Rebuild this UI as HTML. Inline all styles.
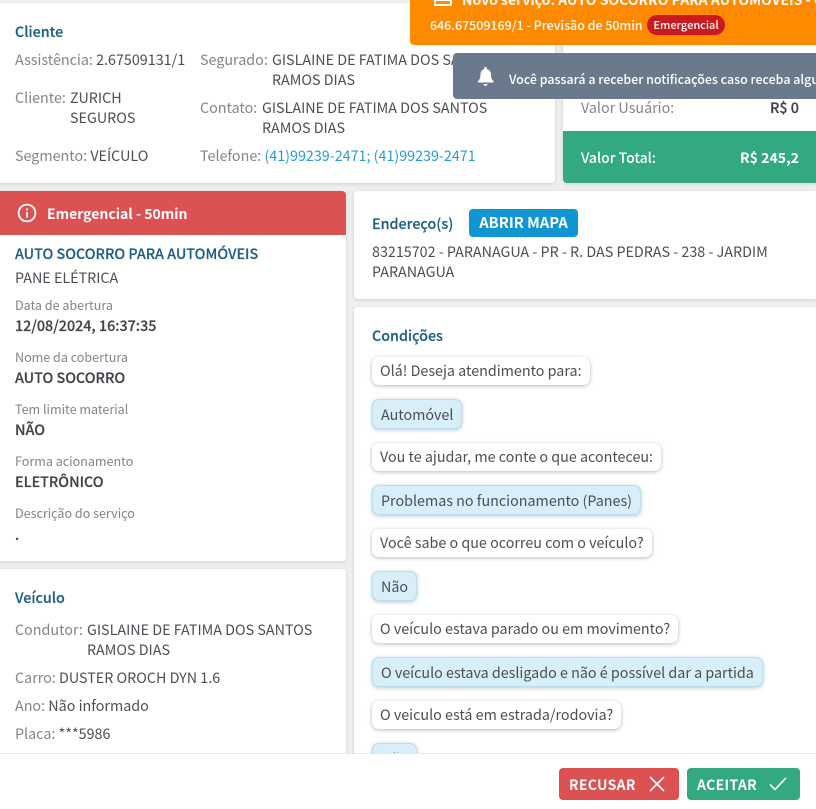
<!DOCTYPE html>
<html lang="pt-BR"><head><meta charset="utf-8"><title>Serviço</title>
<style>
html,body{margin:0;padding:0;width:816px;height:809px;overflow:hidden;background:#eeeeee}
body{position:relative;font-family:"Noto Sans CJK JP","Liberation Sans",sans-serif;font-size:14.32px;color:#4a4f55}
.c{position:absolute;background:#fff;border-radius:4px;box-shadow:0 1px 3px rgba(0,0,0,.12)}
.t{position:absolute;white-space:nowrap;line-height:20px}
.h{color:#1b5e82;font-weight:500;-webkit-text-stroke:.15px #1b5e82}
.l{color:#80858a}
.s{font-size:12.55px;color:#80858a}
.b{font-weight:500;color:#3f4449;-webkit-text-stroke:.2px #3f4449}
.a{color:#2a9bd1}
.q,.r{position:absolute;left:372px;box-sizing:border-box;white-space:nowrap;line-height:20px;border-radius:7px;color:#4a4f55}
.q{height:28px;padding:4px 8px;background:#fff;box-shadow:0 1px 4px rgba(0,0,0,.28)}
.r{height:30px;padding:5px 8px;background:#d8eef8;border:1px solid #b9deee;box-shadow:0 1px 4px rgba(40,90,120,.35)}
</style></head><body>

<div class="c" style="left:0;top:3px;width:555px;height:180px;border-radius:0 4px 4px 0"></div>
<div class="t h" style="left:15px;top:22px">Cliente</div>
<div class="t l" style="left:15px;top:50px">Assistência: <span style="color:#4a4f55">2.67509131/1</span></div>
<div class="t l" style="left:15px;top:88px">Cliente:</div>
<div class="t" style="left:70px;top:88px">ZURICH</div>
<div class="t" style="left:70px;top:108px">SEGUROS</div>
<div class="t l" style="left:15px;top:146px">Segmento: <span style="color:#4a4f55">VEÍCULO</span></div>
<div class="t l" style="left:200px;top:50px">Segurado:</div>
<div class="t" style="left:272px;top:50px">GISLAINE DE FATIMA DOS SANTOS</div>
<div class="t" style="left:272px;top:70px">RAMOS DIAS</div>
<div class="t l" style="left:200px;top:98px">Contato:</div>
<div class="t" style="left:262px;top:98px">GISLAINE DE FATIMA DOS SANTOS</div>
<div class="t" style="left:262px;top:118px">RAMOS DIAS</div>
<div class="t l" style="left:200px;top:146px">Telefone: <span class="a">(41)99239-2471; (41)99239-2471</span></div>

<div class="c" style="left:563px;top:40px;width:253px;height:143px;border-radius:4px 0 0 4px"></div>
<div class="t l" style="left:581px;top:98px">Valor Usuário:</div>
<div class="t b" style="left:770px;top:98px">R$ 0</div>
<div style="position:absolute;left:563px;top:131px;width:253px;height:52px;background:#33a97f;border-radius:0 0 0 4px"></div>
<div class="t" style="left:581px;top:148px;color:#fff;font-weight:500;font-size:14px">Valor Total:</div>
<div class="t" style="left:740px;top:148px;color:#fff;font-weight:700;font-size:14.1px">R$ 245,2</div>

<div style="position:absolute;left:410px;top:-1px;width:406px;height:46px;background:#ff8a00;border-radius:0 0 0 4px;overflow:hidden">
<svg style="position:absolute;left:22px;top:-6px" width="22" height="14" viewBox="0 0 22 14" fill="none" stroke="#fff" stroke-width="2"><path d="M3 1V12H19V1M3 7H19"/></svg>
<div class="t" style="left:52px;top:-9px;color:#fff;font-weight:700;font-size:14px">Novo serviço: AUTO SOCORRO PARA AUTOMÓVEIS - CLIENTE</div>
<div class="t" style="left:20px;top:16px;color:#fff;font-size:12.45px;font-weight:500">646.67509169/1 - Previsão de 50min</div>
<div class="t" style="left:237px;top:16px;height:20px;width:78px;text-align:center;background:#cb1a1f;border-radius:10px;color:#fff;font-size:11px;font-weight:500">Emergencial</div>
</div>

<div style="position:absolute;left:453px;top:53px;width:363px;height:46px;background:#6a7a8c;border-radius:4px 0 0 4px;overflow:hidden">
<svg style="position:absolute;left:23px;top:13px" width="19" height="21" viewBox="0 0 19 21" fill="#fff"><path d="M9.5 1a1.4 1.4 0 0 1 1.4 1.4v.7c3 .7 4.2 3.2 4.2 6 0 3.4 1 4.6 2.4 6.2.4.5.1 1.2-.6 1.2H2.600c-.7 0-1-.7-.6-1.200C3.400 13.700 4.400 12.500 4.400 9.100c0-2.800 1.200-5.300 3.700-6v-.7A1.400 1.400 0 0 1 9.500 1zM7.600 18h3.800a1.900 1.900 0 0 1-3.800 0z"/></svg>
<div class="t" style="left:56px;top:16px;color:#fff;font-size:12.45px;font-weight:500">Você passará a receber notificações caso receba alguma solicitação</div>
</div>

<div class="c" style="left:0;top:191px;width:346px;height:370px;border-radius:0 4px 4px 0"></div>
<div style="position:absolute;left:0;top:191px;width:346px;height:44px;background:#dc5252;border-radius:0 4px 0 0"></div>
<svg style="position:absolute;left:17px;top:203px" width="20" height="20" viewBox="0 0 20 20" fill="none" stroke="#fff" stroke-width="1.800"><circle cx="10" cy="10" r="8.400"/><path d="M10 9V14.500M10 5.500V7.200"/></svg>
<div class="t" style="left:47px;top:204px;color:#fff;font-weight:700;font-size:14px">Emergencial - 50min</div>
<div class="t h" style="left:15px;top:244px">AUTO SOCORRO PARA AUTOMÓVEIS</div>
<div class="t" style="left:15px;top:268px">PANE ELÉTRICA</div>
<div class="t s" style="left:15px;top:295px">Data de abertura</div>
<div class="t b" style="left:15px;top:316px">12/08/2024, 16:37:35</div>
<div class="t s" style="left:15px;top:347px">Nome da cobertura</div>
<div class="t b" style="left:15px;top:368px">AUTO SOCORRO</div>
<div class="t s" style="left:15px;top:399px">Tem limite material</div>
<div class="t b" style="left:15px;top:420px">NÃO</div>
<div class="t s" style="left:15px;top:451px">Forma acionamento</div>
<div class="t b" style="left:15px;top:472px">ELETRÔNICO</div>
<div class="t s" style="left:15px;top:503px">Descrição do serviço</div>
<div class="t b" style="left:15px;top:525px">.</div>

<div class="c" style="left:0;top:569px;width:346px;height:240px;border-radius:0 4px 0 0"></div>
<div class="t h" style="left:15px;top:588px">Veículo</div>
<div class="t l" style="left:15px;top:620px">Condutor:</div>
<div class="t" style="left:87px;top:620px">GISLAINE DE FATIMA DOS SANTOS</div>
<div class="t" style="left:87px;top:640px">RAMOS DIAS</div>
<div class="t l" style="left:15px;top:668px">Carro: <span style="color:#4a4f55">DUSTER OROCH DYN 1.6</span></div>
<div class="t l" style="left:15px;top:696px">Ano: <span style="color:#4a4f55">Não informado</span></div>
<div class="t l" style="left:15px;top:724px">Placa: <span style="color:#4a4f55">***5986</span></div>

<div class="c" style="left:354px;top:191px;width:462px;height:108px;border-radius:4px 0 0 4px"></div>
<div class="t h" style="left:372px;top:214px">Endereço(s)</div>
<div style="position:absolute;left:469px;top:209px;width:109px;height:28px;background:#0f96d2;border-radius:4px;color:#fff;font-weight:700;font-size:14.8px;line-height:28px;text-align:center">ABRIR MAPA</div>
<div class="t" style="left:372px;top:242px">83215702 - PARANAGUA - PR - R. DAS PEDRAS - 238 - JARDIM</div>
<div class="t" style="left:372px;top:262px">PARANAGUA</div>

<div class="c" style="left:354px;top:307px;width:462px;height:502px;border-radius:4px 0 0 0"></div>
<div class="t h" style="left:372px;top:326px">Condições</div>
<div class="q" style="top:357px">Olá! Deseja atendimento para:</div>
<div class="r" style="top:399px">Automóvel</div>
<div class="q" style="top:443px">Vou te ajudar, me conte o que aconteceu:</div>
<div class="r" style="top:485px">Problemas no funcionamento (Panes)</div>
<div class="q" style="top:529px">Você sabe o que ocorreu com o veículo?</div>
<div class="r" style="top:571px">Não</div>
<div class="q" style="top:615px">O veículo estava parado ou em movimento?</div>
<div class="r" style="top:657px">O veículo estava desligado e não é possível dar a partida</div>
<div class="q" style="top:701px">O veiculo está em estrada/rodovia?</div>
<div class="r" style="top:743px">Não</div>

<div style="position:absolute;left:0;top:753px;width:816px;height:56px;background:#fff;border-top:1px solid #e8e8e8;box-sizing:border-box"></div>
<div style="position:absolute;left:559px;top:768px;width:120px;height:32px;background:#dc5252;border-radius:4px"></div>
<div class="t" style="left:569px;top:775px;color:#fff;font-weight:700;font-size:14px;letter-spacing:.3px">RECUSAR</div>
<svg style="position:absolute;left:649px;top:776px" width="16" height="16" viewBox="0 0 16 16" fill="none" stroke="#fff" stroke-width="1.600"><path d="M1 1L15 15M15 1L1 15"/></svg>
<div style="position:absolute;left:687px;top:768px;width:113px;height:32px;background:#33a97f;border-radius:4px"></div>
<div class="t" style="left:697px;top:775px;color:#fff;font-weight:700;font-size:14px;letter-spacing:.3px">ACEITAR</div>
<svg style="position:absolute;left:769px;top:777px" width="18" height="14" viewBox="0 0 18 14" fill="none" stroke="#fff" stroke-width="1.600"><path d="M1 7.500L6 12.500L17 1"/></svg>
</body></html>
